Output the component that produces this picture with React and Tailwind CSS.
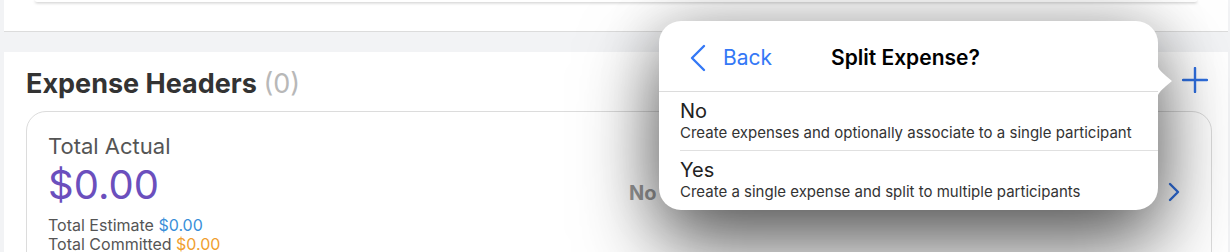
import React from "react";

export default function App() {
  return (
    <div className="relative w-[1230px] h-[252px] overflow-hidden bg-[#f2f3f5]" style={{ fontFamily: "Inter, 'Liberation Sans', sans-serif" }}>
      <div className="ml-[4px] mr-[2px] flex flex-col">
        {/* top section */}
        <div className="shrink-0 h-[32px] bg-white border-b border-[#dcdcdc]">
          <div className="mx-[31px] h-[2px] bg-white shadow-[0_1px_3px_rgba(0,0,0,0.25)] rounded-b-[10px]" />
        </div>
        <div className="shrink-0 h-[20px] bg-[#f2f3f5]" />
        <div className="shrink-0 bg-white pl-[22px] pr-[16px] h-[300px]">
          <div className="flex items-center justify-between h-[59px] pt-[4px]">
            <div className="text-[27px] font-bold text-[#333] leading-[30px]">
              Expense Headers <span className="font-normal text-[#b8b8b8]">(0)</span>
            </div>
            <svg width="26" height="26" viewBox="0 0 26 26" className="mr-[4px] -mt-[8px]">
              <path d="M13 1v24M1 13h24" stroke="#2f6fe0" strokeWidth="2.4" strokeLinecap="round" />
            </svg>
          </div>
          <div className="border border-[#dcdcdc] rounded-[20px] h-[180px] pl-[21px] pr-[30px] pt-[20px] grid grid-cols-[581px_1fr_auto] items-start">
            <div className="flex flex-col">
              <div className="text-[22px] text-[#555] leading-[28px]">Total Actual</div>
              <div className="text-[40px] text-[#6b4fbd] leading-[46px] mt-[2px]">$0.00</div>
              <div className="text-[16px] text-[#555] leading-[19px] mt-[8px]">
                Total Estimate <span className="text-[#3a8fd9]">$0.00</span>
              </div>
              <div className="text-[16px] text-[#555] leading-[19px]">
                Total Committed <span className="text-[#f0a030]">$0.00</span>
              </div>
            </div>
            <div className="text-[20px] font-bold text-[#9a9a9a] mt-[46px] whitespace-nowrap">No Expense Headers</div>
            <svg width="14" height="20" viewBox="0 0 14 20" className="mt-[50px]">
              <path d="M3 2l8 8-8 8" stroke="#2f6fe0" strokeWidth="2.4" fill="none" strokeLinecap="round" strokeLinejoin="round" />
            </svg>
          </div>
        </div>
      </div>

      {/* popover */}
      <div className="absolute left-[659px] top-[21px] w-[499px] h-[189px] bg-white rounded-[22px] shadow-[0_0_60px_rgba(0,0,0,0.2),0_36px_80px_rgba(0,0,0,0.6)]">
        <svg className="absolute right-[-17px] top-[40px]" width="18" height="40" viewBox="0 0 18 40">
          <path d="M0 0 C0 8 4 10 9 15 L15 20 L9 25 C4 30 0 32 0 40 Z" fill="white" />
        </svg>
        <div className="h-[71px] flex items-center relative border-b border-[#dcdcdc] pt-[4px]">
          <div className="flex items-center pl-[31px]">
            <svg width="16" height="28" viewBox="0 0 16 28">
              <path d="M14 2L2 14l12 12" stroke="#3478f6" strokeWidth="2.4" fill="none" strokeLinecap="round" strokeLinejoin="round" />
            </svg>
            <span className="text-[21px] ml-[17px] text-[#3478f6]">Back</span>
          </div>
          <div className="absolute left-[172px] top-0 h-full flex items-center pt-[4px] text-[21px] font-semibold text-black">Split Expense?</div>
        </div>
        <div className="pl-[21px]">
          <div className="h-[59px] border-b border-[#e0e0e0] flex flex-col justify-center">
            <div className="text-[20px] text-[#222] leading-[24px]">No</div>
            <div className="text-[15px] text-[#333] leading-[20px]">Create expenses and optionally associate to a single participant</div>
          </div>
          <div className="h-[58px] flex flex-col justify-center">
            <div className="text-[20px] text-[#222] leading-[24px]">Yes</div>
            <div className="text-[15px] text-[#333] leading-[20px]">Create a single expense and split to multiple participants</div>
          </div>
        </div>
      </div>
    </div>
  );
}
